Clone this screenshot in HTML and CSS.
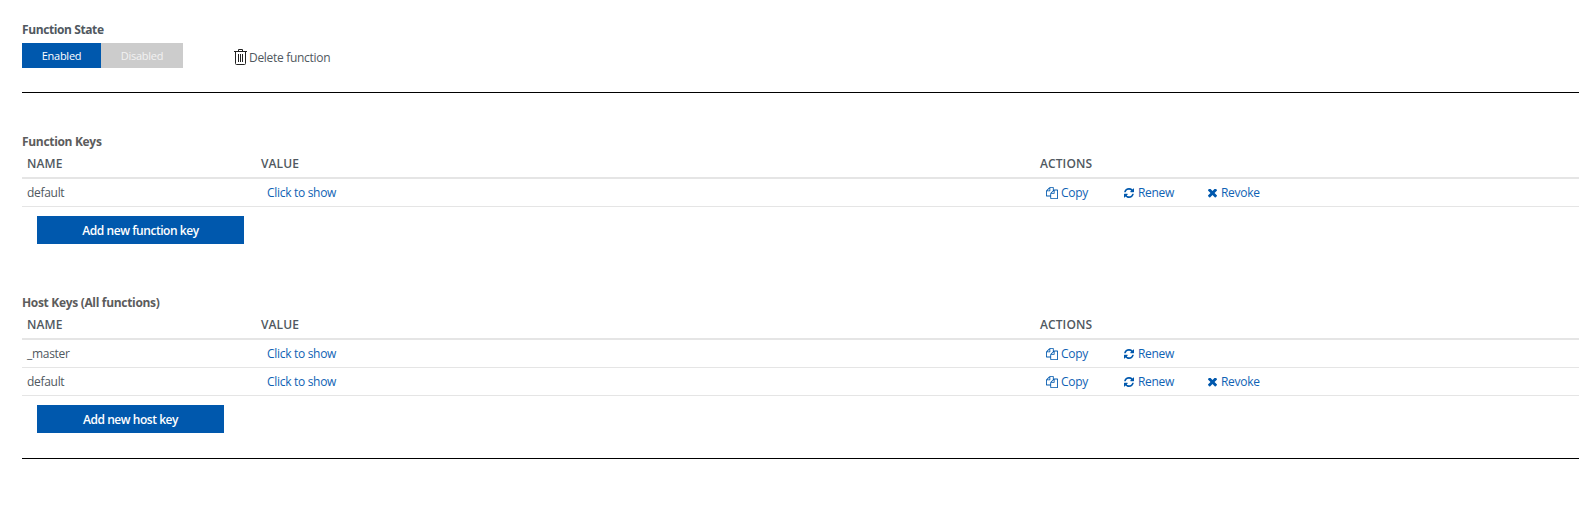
FILE: index.html
```
<!DOCTYPE html>
<html lang="en">
<head>
<meta charset="utf-8">
<title>Function keys</title>
<link rel="stylesheet" href="styles.css">
</head>
<body>
<svg class="defs" aria-hidden="true">
  <symbol id="copy" viewBox="0 0 1792 1792"><path d="M1696 384q40 0 68 28t28 68v1216q0 40-28 68t-68 28h-960q-40 0-68-28t-28-68v-288h-544q-40 0-68-28t-28-68v-672q0-40 20-88t48-76l408-408q28-28 76-48t88-20h416q40 0 68 28t28 68v328q68-40 128-40h416zm-544 213l-299 299h299v-299zm-640-384l-299 299h299v-299zm196 647l316-316v-416h-384v416q0 40-28 68t-68 28h-416v640h512v-256q0-40 20-88t48-76zm956 804v-1152h-384v416q0 40-28 68t-68 28h-416v640h896z"/></symbol>
  <symbol id="renew" viewBox="128 128 1536 1536"><path d="M1639 1056q0 5-1 7-64 268-268 434.500t-478 166.500q-146 0-282.500-55t-243.500-157l-129 129q-19 19-45 19t-45-19-19-45v-448q0-26 19-45t45-19h448q26 0 45 19t19 45-19 45l-137 137q71 66 161 102t187 36q134 0 250-65t186-179q11-17 53-117 8-23 30-23h192q13 0 22.500 9.500t9.500 22.500zm25-800v448q0 26-19 45t-45 19h-448q-26 0-45-19t-19-45 19-45l138-138q-148-137-349-137-134 0-250 65t-186 179q-11 17-53 117-8 23-30 23h-199q-13 0-22.500-9.500t-9.500-22.500v-7q65-268 270-434.500t480-166.500q146 0 284 55.500t245 156.500l130-129q19-19 45-19t45 19 19 45z"/></symbol>
  <symbol id="revoke" viewBox="302 434 1188 1188"><path d="M1490 1322q0 40-28 68l-136 136q-28 28-68 28t-68-28l-294-294-294 294q-28 28-68 28t-68-28l-136-136q-28-28-28-68t28-68l294-294-294-294q-28-28-28-68t28-68l136-136q28-28 68-28t68 28l294 294 294-294q28-28 68-28t68 28l136 136q28 28 28 68t-28 68l-294 294 294 294q28 28 28 68z"/></symbol>
</svg>
<main class="page">
  <h2 class="heading state-title">Function State</h2>
  <div class="state">
    <div class="toggle"><span class="on">Enabled</span><span class="off">Disabled</span></div>
    <div class="delete">
      <svg class="trash" viewBox="0 0 13 16"><path d="M0 2.500h13M4.500 2V.5h4V2M1.500 3v11.500q0 1 1 1h8q1 0 1-1V3M4.500 5v8M6.500 5v8M8.500 5v8"/></svg>
      <span>Delete function</span>
    </div>
  </div>
  <hr class="rule">
  <section class="keys">
    <h2 class="heading keys-title">Function Keys</h2>
    <div class="row head"><span class="name">NAME</span><span class="value">VALUE</span><span class="actions">ACTIONS</span></div>
    <div class="row"><span class="name">default</span><a class="value show">Click to show</a><div class="actions"><a class="copy"><svg><use href="#copy"/></svg><span>Copy</span></a><a class="renew"><svg><use href="#renew"/></svg><span>Renew</span></a><a class="revoke"><svg><use href="#revoke"/></svg><span>Revoke</span></a></div></div>
    <button class="add add-function">Add new function key</button>
  </section>
  <section class="keys host">
    <h2 class="heading host-title">Host Keys (All functions)</h2>
    <div class="row head"><span class="name">NAME</span><span class="value">VALUE</span><span class="actions">ACTIONS</span></div>
    <div class="row"><span class="name">_master</span><a class="value show">Click to show</a><div class="actions"><a class="copy"><svg><use href="#copy"/></svg><span>Copy</span></a><a class="renew"><svg><use href="#renew"/></svg><span>Renew</span></a></div></div>
    <div class="row"><span class="name">default</span><a class="value show">Click to show</a><div class="actions"><a class="copy"><svg><use href="#copy"/></svg><span>Copy</span></a><a class="renew"><svg><use href="#renew"/></svg><span>Renew</span></a><a class="revoke"><svg><use href="#revoke"/></svg><span>Revoke</span></a></div></div>
    <button class="add add-host">Add new host key</button>
  </section>
  <hr class="rule last">
</main>
</body>
</html>
```
FILE: styles.css
```
* { box-sizing: border-box; }
body { margin: 0; background: #fff; color: #505860; font: 12px/18px "Open Sans", "Noto Sans", sans-serif; letter-spacing: -0.3px; }
.defs { display: none; }
.page { padding: 21px 15px 0 22px; white-space: nowrap; }
.heading { margin: 0; font-size: 12px; line-height: 18px; font-weight: 700; color: #5c5c5c; letter-spacing: -0.32px; }
.state-title { color: #505860; letter-spacing: -0.4px; }
.state { display: flex; margin-top: 4px; height: 25px; }
.toggle { display: flex; font-size: 11px; line-height: 25px; text-align: center; letter-spacing: -0.25px; }
.on { width: 79px; background: #0058ad; color: #fff; }
.off { width: 82px; background: #ccc; color: #f2f2f2; }
.delete { display: flex; margin-left: 51px; padding-top: 6px; gap: 2px; }
.delete span { line-height: 18px; letter-spacing: -0.3px; }
.trash { width: 13px; height: 16px; fill: none; stroke: #222; stroke-width: 1; }
.rule { margin: 24px 0 0; border: 0; height: 1px; background: #000; }
.keys { margin-top: 40px; }
.keys.host { margin-top: 50px; }
.row { display: flex; align-items: center; height: 28px; border-bottom: 1px solid #e5e5e5; padding-left: 5px; }
.row.head { height: 28px; border-bottom-width: 2px; font-weight: 600; letter-spacing: 0.1px; }
.name { width: 234px; }
.value { width: 779px; }
.show { padding-left: 6px; }
.actions { display: flex; }
a { color: #0f62b4; }
.row div.actions { padding-left: 6px; }
.actions a { display: flex; align-items: center; gap: 4px; }
.actions svg { width: 12px; height: 12px; fill: #0058ad; flex: none; }
.actions .copy { width: 78px; gap: 3px; }
.actions .renew { width: 84px; }
.actions .renew svg { width: 10px; height: 10px; }
.actions .revoke svg { width: 9px; height: 9px; margin-top: 1px; }
.add { display: block; margin: 9px 0 0 15px; height: 28px; border: 0; padding: 1px 0 0; background: #0058ad; color: #fff; font: 600 12px/27px "Open Sans", "Noto Sans", sans-serif; letter-spacing: -0.45px; text-align: center; }
.add-function { width: 207px; }
.add-host { width: 187px; }
.last { margin-top: 25px; }
```
